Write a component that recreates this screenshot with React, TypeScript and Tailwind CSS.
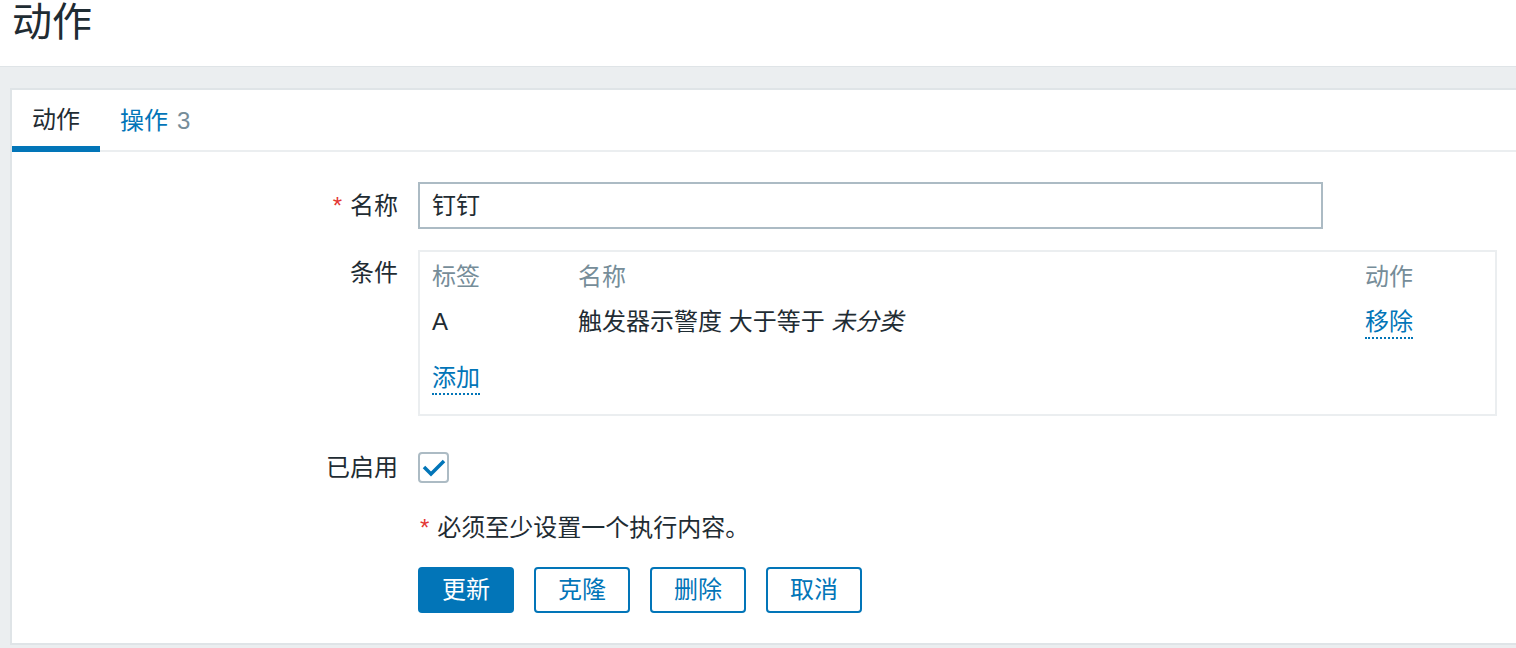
import React from "react";

const font = { fontFamily: '"Liberation Sans", "Noto Sans CJK SC", sans-serif' };

function Label({ children, required }: { children: React.ReactNode; required?: boolean }) {
  return (
    <div className="text-right text-[24px] leading-[30px] text-[#1f2c33]">
      {required && <span className="text-[#e33734] mr-[8px]">*</span>}
      {children}
    </div>
  );
}

export default function App(): JSX.Element {
  // Buttons under the form
  const buttons = ["克隆", "删除", "取消"];

  return (
    <div style={font} className="min-h-[648px] bg-[#ebeef0]">
      {/* Page title */}
      <div className="h-[67px] bg-white border-b border-[#dfe4e7] pl-[12px]">
        <h1 className="text-[40px] leading-[44px] text-[#1f2c33]">动作</h1>
      </div>

      <div className="pt-[21px] pl-[10px]">
        <div className="bg-white border-t-2 border-l-2 border-b-2 border-[#dfe4e7] pb-[30px]">
          {/* Tabs */}
          <div className="flex border-b-2 border-[#ebeef0] text-[24px] leading-[30px]">
            <div className="h-[62px] -mb-[2px] pt-[4px] px-[20px] flex items-center border-b-[6px] border-[#0275b8] text-[#1f2c33]">
              动作
            </div>
            <div className="h-[62px] -mb-[2px] px-[20px] flex items-center text-[#0275b8]">
              操作<span className="ml-[9px] text-[#768d99]">3</span>
            </div>
          </div>

          {/* Form */}
          <div className="pt-[30px] grid grid-cols-[386px_1fr] gap-x-[20px] text-[24px] leading-[30px] text-[#1f2c33]">
            {/* Name */}
            <div className="flex items-center justify-end h-[47px]">
              <Label required>名称</Label>
            </div>
            <div>
              <div className="w-[905px] h-[47px] border-2 border-[#acbbc4] px-[12px] flex items-center">
                钉钉
              </div>
            </div>

            {/* Conditions */}
            <div className="mt-[21px] pt-[8px] flex justify-end items-start">
              <Label>条件</Label>
            </div>
            <div className="mt-[21px]">
              <div className="w-[1079px] border-2 border-[#ebeef0] px-[12px] pt-[10px] pb-[19px]">
                <div className="grid grid-cols-[146px_1fr_118px] text-[#768d99]">
                  <div>标签</div>
                  <div>名称</div>
                  <div>动作</div>
                </div>
                <div className="grid grid-cols-[146px_1fr_118px] mt-[15px] items-start">
                  <div>A</div>
                  <div>
                    触发器示警度 大于等于 <span className="italic">未分类</span>
                  </div>
                  <div>
                    <span className="inline-block text-[#0275b8] border-b-2 border-dotted border-[#0275b8]">
                      移除
                    </span>
                  </div>
                </div>
                <div className="mt-[24px]">
                  <span className="inline-block text-[#0275b8] border-b-2 border-dotted border-[#0275b8]">
                    添加
                  </span>
                </div>
              </div>
            </div>

            {/* Enabled */}
            <div className="mt-[36px] h-[31px] flex items-center justify-end">
              <Label>已启用</Label>
            </div>
            <div className="mt-[36px]">
              <div className="w-[31px] h-[31px] border-2 border-[#acbbc4] rounded-[4px] bg-white">
                <svg width="27" height="27" viewBox="0 0 27 27">
                  <polyline
                    points="4,13 11,20 24,7"
                    fill="none"
                    stroke="#0275b8"
                    strokeWidth="3.5"
                  />
                </svg>
              </div>
            </div>

            {/* Notice */}
            <div></div>
            <div className="mt-[30px] pl-[2px]">
              <span className="text-[#e33734] mr-[8px]">*</span>必须至少设置一个执行内容。
            </div>

            {/* Buttons */}
            <div></div>
            <div className="mt-[24px] flex gap-[20px]">
              <button className="w-[96px] h-[46px] rounded-[4px] bg-[#0275b8] text-white text-[24px]">
                更新
              </button>
              {buttons.map((b) => (
                <button
                  key={b}
                  className="w-[96px] h-[46px] rounded-[4px] border-2 border-[#0275b8] bg-white text-[#0275b8] text-[24px]"
                >
                  {b}
                </button>
              ))}
            </div>
          </div>
        </div>
      </div>
    </div>
  );
}
